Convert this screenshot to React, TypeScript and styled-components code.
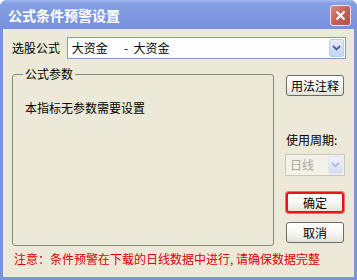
import React from 'react'
import styled, { createGlobalStyle, css } from 'styled-components'

const GlobalStyle = createGlobalStyle`
  html, body {
    margin: 0;
    padding: 0;
    background: #ffffff;
  }
  body {
    font-family: "Noto Sans CJK SC", "Noto Sans", sans-serif;
    font-size: 12px;
  }
`

const Window = styled.div`
  width: 357px;
  height: 280px;
  display: flex;
  flex-direction: column;
  background: #7a94dc;
  border-radius: 7px 7px 0 0;
  overflow: hidden;
`

const TitleBar = styled.div`
  height: 29px;
  flex: none;
  display: flex;
  align-items: center;
  justify-content: space-between;
  padding: 0 6px 0 8px;
  background: linear-gradient(#a3b8ef 0%, #849fe3 12%, #7c97df 60%, #7690dc 100%);
`

const Title = styled.span`
  color: #ffffff;
  font-size: 14px;
  font-weight: bold;
  letter-spacing: 0px;
`

const CloseButton = styled.div`
  width: 19px;
  height: 19px;
  border: 1px solid #f2e4e4;
  border-radius: 3px;
  background: linear-gradient(135deg, #d88a80 0%, #c2625a 50%, #b0504a 100%);
  display: flex;
  align-items: center;
  justify-content: center;
  margin-top: 1px;
`

const Body = styled.div`
  flex: 1;
  margin: 0 3px 3px 3px;
  background: #ece9d8;
  padding: 8px 8px 0 9px;
  display: flex;
  flex-direction: column;
`

const FormulaRow = styled.div`
  display: flex;
  align-items: center;
  height: 22px;
`

const Label = styled.span`
  color: #000000;
  font-size: 12px;
  line-height: 14px;
  white-space: pre;
`

const FormulaLabel = styled(Label)`
  width: 55px;
`

const Combo = styled.div<{ $disabled?: boolean }>`
  height: 22px;
  box-sizing: border-box;
  border: 1px solid ${p => (p.$disabled ? '#c9c7ba' : '#7f9db9')};
  background: ${p => (p.$disabled ? '#f3f1e8' : '#ffffff')};
  display: flex;
  align-items: center;
  justify-content: space-between;
  padding: 1px;
`

const ComboText = styled.span<{ $disabled?: boolean }>`
  padding-left: 3px;
  font-size: 12px;
  line-height: 14px;
  white-space: pre;
  color: ${p => (p.$disabled ? '#aca899' : '#000000')};
`

const ArrowButton = styled.div<{ $disabled?: boolean }>`
  width: 15px;
  height: 18px;
  box-sizing: border-box;
  border: 1px solid ${p => (p.$disabled ? '#dfe5f2' : '#bccbf0')};
  border-radius: 2px;
  background: ${p =>
    p.$disabled
      ? 'linear-gradient(#eef2fa, #d4def2)'
      : 'linear-gradient(#e6eefc, #c1d3fb)'};
  display: flex;
  align-items: center;
  justify-content: center;
`

const Main = styled.div`
  display: flex;
  margin-top: 8px;
`

const Group = styled.fieldset`
  margin: 0;
  padding: 0 0 0 12px;
  width: 262px;
  height: 179px;
  box-sizing: border-box;
  border: 1px solid #8a8a80;
  border-radius: 3px;
  min-inline-size: 0;
`

const GroupLegend = styled.legend`
  margin-left: -2px;
  padding: 0 2px;
  font-size: 12px;
  line-height: 14px;
  color: #000000;
`

const GroupText = styled.p`
  margin: 20px 0 0 0;
  font-size: 12px;
  line-height: 14px;
  color: #000000;
`

const Side = styled.div`
  margin-left: 12px;
  width: 59px;
  display: flex;
  flex-direction: column;
`

const buttonBase = css`
  height: 21px;
  box-sizing: border-box;
  display: flex;
  align-items: center;
  justify-content: center;
  font-size: 12px;
  color: #000000;
  border-radius: 3px;
  background: linear-gradient(#ffffff 0%, #f6f6f2 55%, #e3e1d8 100%);
`

const Button = styled.div<{ $top: number; $focused?: boolean }>`
  ${buttonBase};
  width: 58px;
  margin-top: ${p => p.$top}px;
  border: ${p => (p.$focused ? '2px solid #e8141c' : '1px solid #6b6b6b')};
  ${p => p.$focused && css`box-shadow: 0 0 0 1px #f07070;`}
`

const SideLabel = styled(Label)`
  margin-top: 37px;
`

const SideCombo = styled(Combo)`
  margin-top: 7px;
  margin-left: -1px;
  width: 60px;
`

const Note = styled.div`
  margin-top: 6px;
  color: #e00000;
  font-size: 12px;
  line-height: 14px;
  padding-left: 2px;
  white-space: pre;
`

function Chevron({ color }: { color: string }) {
  return (
    <svg width="9" height="6" viewBox="0 0 9 6">
      <path d="M1 1 L4.5 4.5 L8 1" fill="none" stroke={color} strokeWidth="1.8" />
    </svg>
  )
}

export default function App() {
  return (
    <>
      <GlobalStyle />
      <Window>
        <TitleBar>
          <Title>公式条件预警设置</Title>
          <CloseButton>
            <svg width="11" height="11" viewBox="0 0 11 11">
              <path d="M1.5 1.5 L9.5 9.5 M9.5 1.5 L1.5 9.5" stroke="#ffffff" strokeWidth="2" />
            </svg>
          </CloseButton>
        </TitleBar>
        <Body>
          <FormulaRow>
            <FormulaLabel>选股公式</FormulaLabel>
            <Combo style={{ width: 280 }}>
              <ComboText>大资金      -  大资金</ComboText>
              <ArrowButton>
                <Chevron color="#4d6185" />
              </ArrowButton>
            </Combo>
          </FormulaRow>
          <Main>
            <Group>
              <GroupLegend>公式参数</GroupLegend>
              <GroupText>本指标无参数需要设置</GroupText>
            </Group>
            <Side>
              <Button $top={8}>用法注释</Button>
              <SideLabel>使用周期:</SideLabel>
              <SideCombo $disabled>
                <ComboText $disabled>日线</ComboText>
                <ArrowButton $disabled>
                  <Chevron color="#b0bcd4" />
                </ArrowButton>
              </SideCombo>
              <Button $top={16} $focused>确定</Button>
              <Button $top={9}>取消</Button>
            </Side>
          </Main>
          <Note>注意：条件预警在下载的日线数据中进行, 请确保数据完整</Note>
        </Body>
      </Window>
    </>
  )
}
